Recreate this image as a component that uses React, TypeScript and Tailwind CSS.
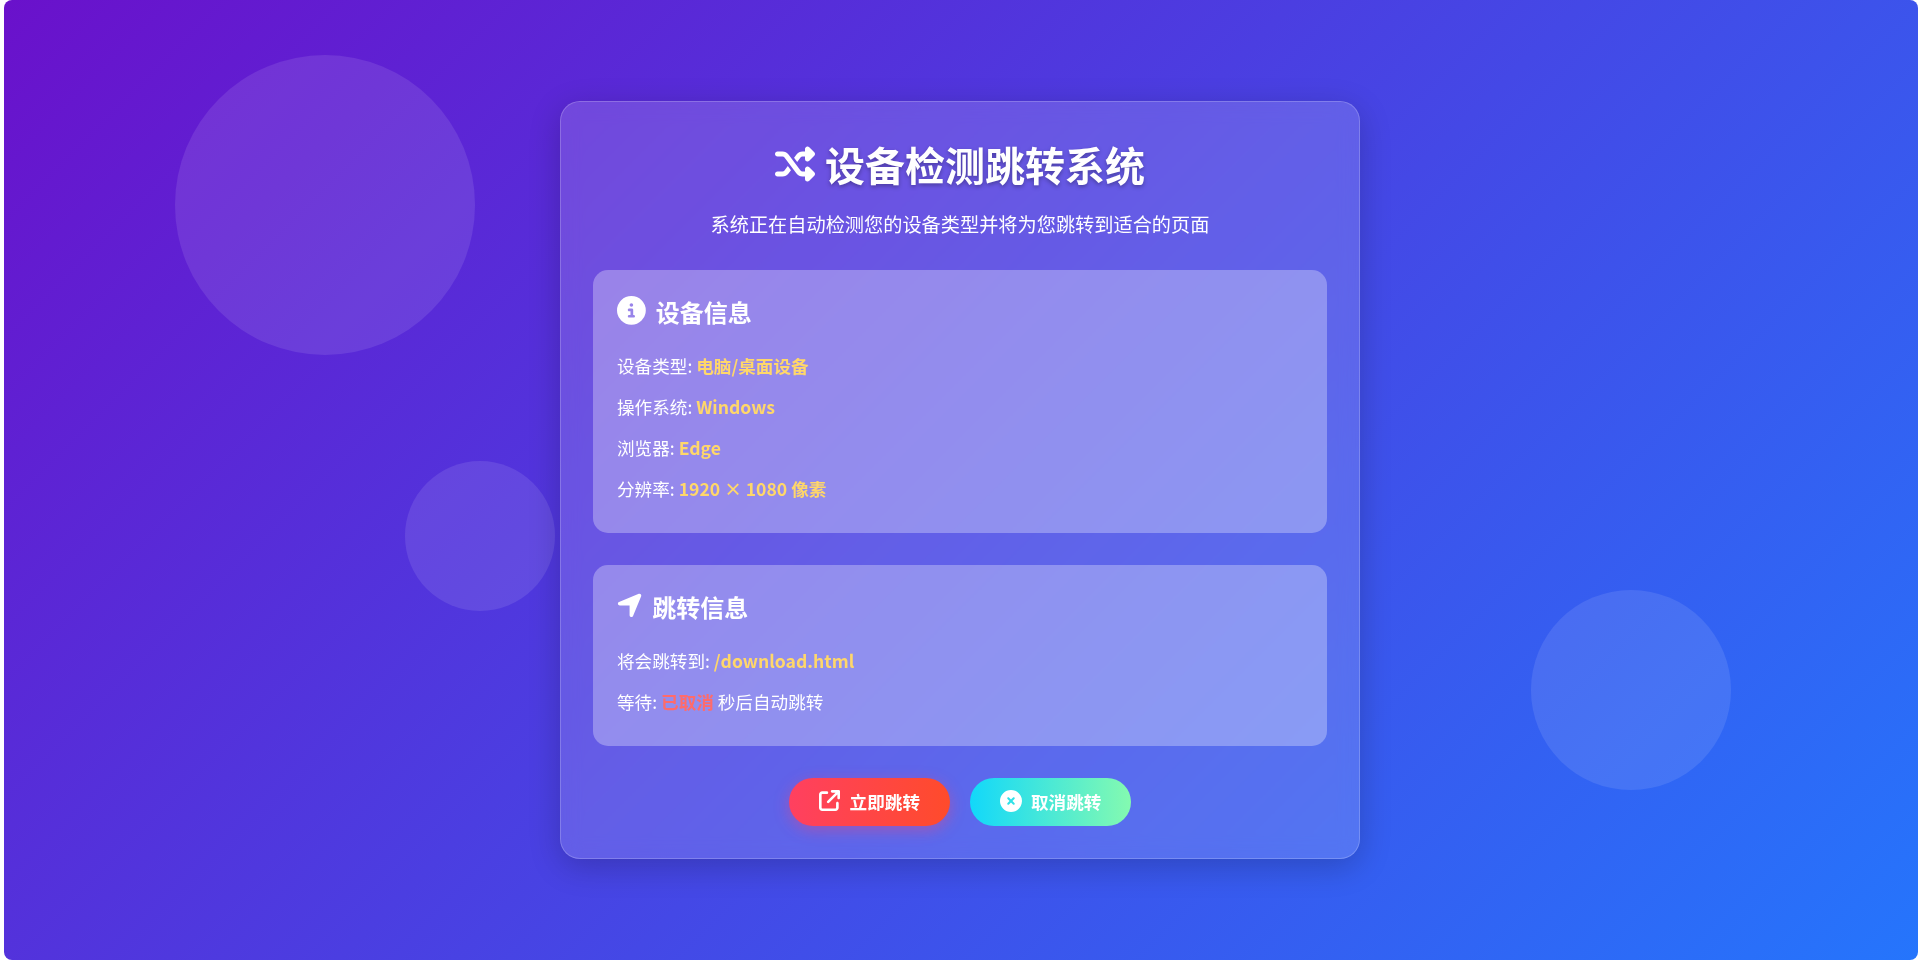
import React from "react";
import {
  FaShuffle,
  FaCircleInfo,
  FaLocationArrow,
  FaArrowUpRightFromSquare,
  FaCircleXmark,
} from "react-icons/fa6";

function Row({ children }: { children: React.ReactNode }) {
  return <p className="text-[17.6px] leading-[28px] text-white">{children}</p>;
}

function Val({ children }: { children: React.ReactNode }) {
  return <span className="font-bold text-[#ffd76a]">{children}</span>;
}

export default function App() {
  return (
    <div className="h-[960px] w-full overflow-hidden bg-white pl-1 pr-0.5 font-['Noto_Sans_CJK_SC','Noto_Sans',sans-serif] leading-[1.6] text-white">
      <div className="relative flex h-[960px] items-center justify-center overflow-hidden rounded-[8px] bg-[linear-gradient(135deg,#6a11cb_0%,#2575fc_100%)]">
        <div className="absolute left-[171px] top-[55px] size-[300px] rounded-full bg-white/10" />
        <div className="absolute left-[401px] top-[461px] size-[150px] rounded-full bg-white/10" />
        <div className="absolute left-[1527px] top-[590px] size-[200px] rounded-full bg-white/10" />

        <main className="relative mb-px mr-0.5 w-[800px] rounded-[20px] border border-white/20 bg-white/15 px-8 pb-8 pt-[30px] shadow-[0_8px_32px_rgba(0,0,0,0.2)] backdrop-blur-[10px]">
          <h1 className="mb-[13px] flex items-center justify-center gap-[10px] text-[40px] font-bold leading-[64px] [text-shadow:0_2px_4px_rgba(0,0,0,0.3)]">
            <FaShuffle className="size-[40px] shrink-0" />
            设备检测跳转系统
          </h1>
          <p className="mb-[30px] text-center text-[19.2px] leading-[31px] text-white">
            系统正在自动检测您的设备类型并将为您跳转到适合的页面
          </p>

          <section className="mb-8 rounded-[15px] bg-white/30 px-6 pb-[30px] pt-[23px]">
            <h2 className="mb-[21px] flex items-center gap-[10px] text-[24px] font-bold leading-[38px]">
              <FaCircleInfo className="mb-0.5 size-[28.8px] shrink-0" />
              设备信息
            </h2>
            <div className="flex flex-col gap-[13px]">
              <Row>
                设备类型: <Val>电脑/桌面设备</Val>
              </Row>
              <Row>
                操作系统: <Val>Windows</Val>
              </Row>
              <Row>
                浏览器: <Val>Edge</Val>
              </Row>
              <Row>
                分辨率: <Val>1920 × 1080 像素</Val>
              </Row>
            </div>
          </section>

          <section className="mb-8 rounded-[15px] bg-white/30 px-6 pb-[30px] pt-[23px]">
            <h2 className="mb-[21px] flex items-center gap-[10px] text-[24px] font-bold leading-[38px]">
              <FaLocationArrow className="mb-0.5 h-[28.8px] w-[25.2px] shrink-0" />
              跳转信息
            </h2>
            <div className="flex flex-col gap-[13px]">
              <Row>
                将会跳转到: <Val>/download.html</Val>
              </Row>
              <Row>
                等待: <span className="font-bold text-[#ff6b6b]">已取消</span> 秒后自动跳转
              </Row>
            </div>
          </section>

          <div className="flex justify-center gap-5">
            <button className="flex h-12 items-center gap-[9px] rounded-full bg-[linear-gradient(90deg,#ff4060,#ff4b2b)] px-[30px] text-[17.6px] font-bold text-white shadow-[0_4px_15px_rgba(255,65,108,0.4)]">
              <FaArrowUpRightFromSquare className="mb-0.5 size-[21px] shrink-0" />
              <span className="pl-px pt-px">立即跳转</span>
            </button>
            <button className="flex h-12 items-center gap-[9px] rounded-full bg-[linear-gradient(90deg,#12d8fa,#84fab0)] px-[30px] text-[17.6px] font-bold text-white">
              <FaCircleXmark className="mb-0.5 size-[22px] shrink-0" />
              <span className="pt-px">取消跳转</span>
            </button>
          </div>
        </main>
      </div>
    </div>
  );
}
